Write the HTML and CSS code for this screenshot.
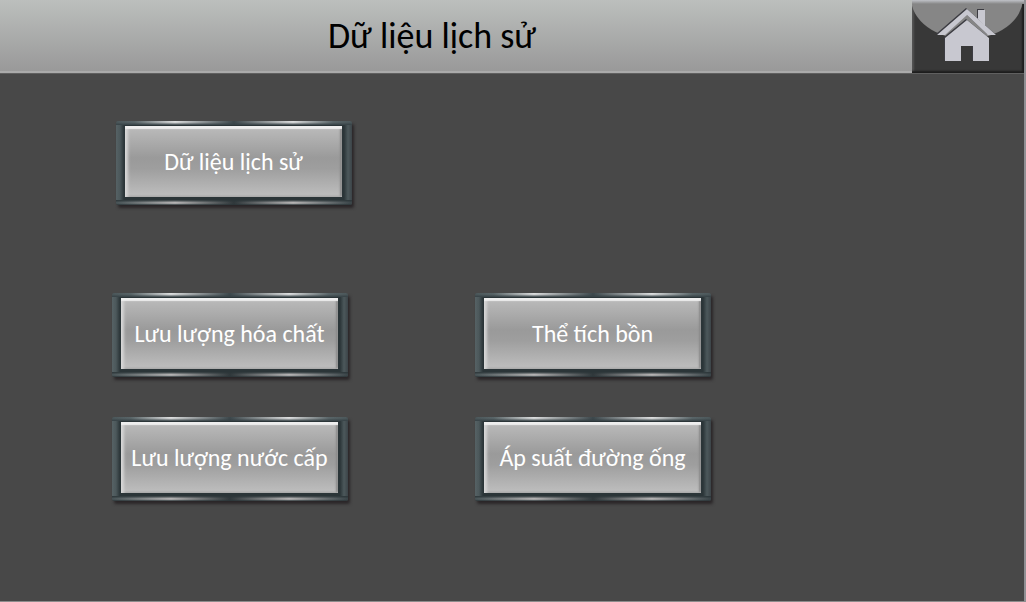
FILE: index.html
```html
<!DOCTYPE html>
<html lang="vi">
<head>
  <meta charset="UTF-8">
  <title>Dữ liệu lịch sử</title>
  <link rel="stylesheet" href="styles.css">
</head>
<body>
  <div class="screen">
    <header class="topbar">
      <h1>Dữ liệu lịch sử</h1>
      <button class="home-btn" type="button" aria-label="Trang chủ">
        <svg viewBox="0 0 112 73" aria-hidden="true">
          <defs>
            <linearGradient id="shine" x1="0" y1="0" x2="0" y2="1">
              <stop offset="0" stop-color="#c0c2c8"/>
              <stop offset="1" stop-color="#868686"/>
            </linearGradient>
          </defs>
          <ellipse cx="55" cy="-2" rx="56" ry="41" fill="#868686"/>
          <rect x="0" y="0" width="112" height="4" fill="url(#shine)"/>
          <g fill="#3c3c42" transform="translate(-1 -1)">
            <path d="M66 10h7v16l-7-7z"/>
            <path d="M25 35L55 9l29 26h-8L55 15 33 35z"/>
            <path d="M33 38L55 20l22 18v23H61V46H49v15H33z"/>
          </g>
          <g fill="#c8c8d0">
            <path d="M66 10h7v16l-7-7z"/>
            <path d="M25 35L55 9l29 26h-8L55 15 33 35z"/>
            <path d="M33 38L55 20l22 18v23H61V46H49v15H33z"/>
          </g>
        </svg>
      </button>
    </header>

    <main>
      <!-- tổng quan -->
      <div class="overview">
        <button class="btn" type="button"><span>Dữ liệu lịch sử</span></button>
      </div>

      <!-- từng loại dữ liệu -->
      <div class="menu">
        <button class="btn" type="button"><span>Lưu lượng hóa chất</span></button>
        <button class="btn" type="button"><span>Thể tích bồn</span></button>
        <button class="btn" type="button"><span>Lưu lượng nước cấp</span></button>
        <button class="btn" type="button"><span>Áp suất đường ống</span></button>
      </div>
    </main>
  </div>
</body>
</html>
```
FILE: styles.css
```css
* {
  box-sizing: border-box;
}

body {
  margin: 0;
  font-family: Carlito, Lato, "Noto Sans", sans-serif;
  background-color: #484848;
}

.screen {
  display: flex;
  flex-direction: column;
  min-height: 100vh;
  border-right: 2px solid #909094;
  border-bottom: 1px solid #8c8c8c;
}

.topbar {
  display: flex;
  height: 73px;
  background: linear-gradient(#bcbfbd, #999);
  border-bottom: 2px solid #aaa;
  box-shadow: 0 1px 0 #606060;
}

.topbar h1 {
  flex: 1;
  margin: 0;
  padding-right: 48px;
  font-size: 36px;
  font-weight: normal;
  line-height: 72px;
  text-align: center;
  color: #000;
}

.home-btn {
  width: 112px;
  height: 73px;
  padding: 0;
  border: 0;
  background-color: #383838;
}

.home-btn svg {
  display: block;
  width: 100%;
  height: 100%;
  box-shadow: inset -2px -2px 2px #1c1c1c, inset 2px 0 2px #555;
}

main {
  flex: 1;
  padding-top: 48px;
}

.overview {
  padding-left: 116px;
}

.menu {
  display: grid;
  grid-template-columns: 236px 236px;
  gap: 40px 127px;
  margin-top: 88px;
  padding-left: 112px;
}

/* metal frame */
.btn {
  display: flex;
  width: 236px;
  height: 84px;
  padding: 5px 10px 8px 9px;
  border: 0;
  border-radius: 2px;
  font-family: inherit;
  font-size: 24px;
  color: #fff;
  background:
    linear-gradient(rgba(60, 72, 76, 0.2), rgba(60, 72, 76, 0) 1px, #364145 4px) top / 100% 4px no-repeat,
    linear-gradient(#2b3538, rgba(43, 53, 56, 0) 3px, #2b3538 5px) bottom / 100% 5px no-repeat,
    linear-gradient(90deg, #4c585b, #5c686b 8%, #f0f0f0 25%, #3c474b 50%, #f0f0f0 75%, #5c686b 92%, #4c585b) top / 100% 4px no-repeat,
    linear-gradient(90deg, #4c585b, #d0cccc 25%, #30383b 50%, #d0cccc 75%, #3c474b) bottom / 100% 5px no-repeat,
    linear-gradient(90deg, #566265, #4c585b 4px, #2b3538 8px, #2b3538 228px, #4c585b 232px, #3c4448);
  box-shadow: 2px 3px 3px #2a2628;
}

/* face */
.btn span {
  flex: 1;
  height: 71px;
  line-height: 71px;
  text-align: center;
  white-space: nowrap;
  background: linear-gradient(#bcbcbc, #9a9a9a 45%, #9e9e9e 60%, #bfbfbf);
  box-shadow: inset 0 3px 1px #eee, inset 3px 0 3px #d4d4d4, inset -2px -1px 2px #888;
}
```
